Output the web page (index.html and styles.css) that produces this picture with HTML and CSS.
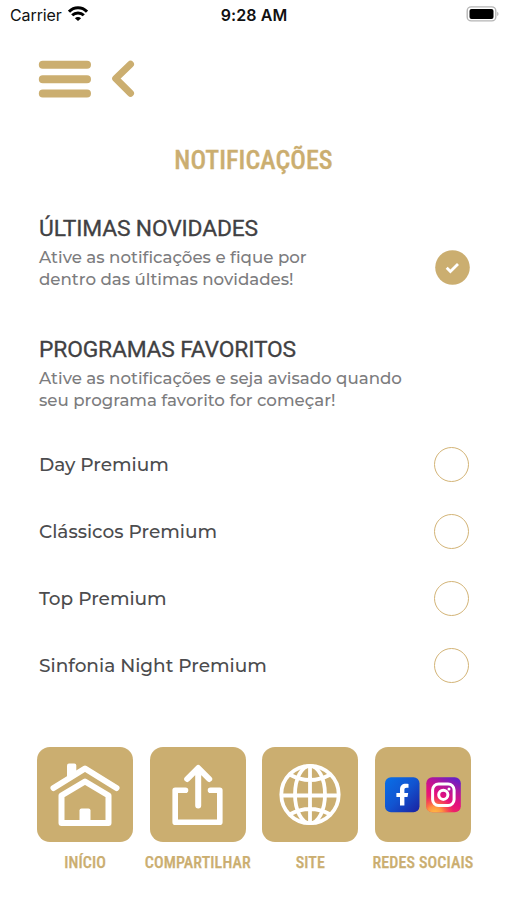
FILE: index.html
```html
<!DOCTYPE html>
<html lang="pt-BR">
<head>
<meta charset="utf-8">
<meta name="viewport" content="width=device-width, initial-scale=1">
<title>Notificações</title>
<link rel="stylesheet" href="styles.css">
</head>
<body>
<header class="status">
  <div class="carrier"><span>Carrier</span>
    <svg class="wifi" width="20" height="15" viewBox="0 0 20 15" fill="none" stroke="#000" stroke-width="3"><path d="M1 5.700C6 .5 14 .5 19 5.700M4.200 9.300c3.100-3.100 8.500-3.100 11.600 0"/><path d="M6.900 12.200c1.800-1.600 4.400-1.600 6.200 0L10 15z" fill="#000" stroke="none"/></svg>
  </div>
  <time>9:28 AM</time>
  <svg class="battery" width="33" height="16" viewBox="0 0 33 16"><rect x="1.200" y=".9" width="28.600" height="14" rx="4" fill="#fff" stroke="#b5b5b5" stroke-width="1.400"/><rect x="3.500" y="3.100" width="24" height="9.800" rx="2" fill="#000"/><path d="M31.300 5.700c1.500.6 1.500 3.800 0 4.400z" fill="#aaa"/></svg>
</header>
<nav class="top">
  <svg width="53" height="38" viewBox="0 0 53 38" stroke="#cbae70" stroke-width="8" stroke-linecap="round"><path d="M4.800 4.800h44.200M4.800 19.200h44.200M4.800 33.400h44.200"/></svg>
  <svg width="24" height="38" viewBox="0 0 24 38" fill="none" stroke="#cbae70" stroke-width="7" stroke-linecap="round" stroke-linejoin="round"><path d="M19.500 4.300 4.700 18.600l14.800 14.700"/></svg>
</nav>
<h1>NOTIFICAÇÕES</h1>
<main>
  <section class="intro first">
    <div><h2>ÚLTIMAS NOVIDADES</h2>
    <p>Ative as notificações e fique por<br>dentro das últimas novidades!</p></div>
    <svg class="check" width="35" height="35" viewBox="0 0 35 35"><circle cx="17.500" cy="17.500" r="17.300" fill="#cbae70"/><path d="m11.700 17.800 3.700 3.800 7.600-7.600" fill="none" stroke="#fff" stroke-width="2.800"/></svg>
  </section>
  <section class="intro">
    <div><h2>PROGRAMAS FAVORITOS</h2>
    <p>Ative as notificações e seja avisado quando<br>seu programa favorito for começar!</p></div>
  </section>
  <ul>
    <li><span>Day Premium</span><i class="radio"></i></li>
    <li><span>Clássicos Premium</span><i class="radio"></i></li>
    <li><span>Top Premium</span><i class="radio"></i></li>
    <li><span>Sinfonia Night Premium</span><i class="radio"></i></li>
  </ul>
</main>
<footer>
  <div class="item">
    <div class="tile"><svg width="96" height="95" viewBox="0 0 96 95" fill="none" stroke="#fff" stroke-width="6" stroke-linecap="round" stroke-linejoin="round"><path d="M16.500 41 48 21.500 79.500 41"/><path d="M30 32V18.500q0-2 2-2h5.300q2 0 2 2v8z" fill="#fff" stroke="none"/><path d="M24.500 48.500v27.500h47V48.500L48 34.500z"/><path d="M42.500 76V63.500q0-2 2-2h7q2 0 2 2V76z" fill="#fff" stroke="none"/></svg></div>
    <span class="label">INÍCIO</span>
  </div>
  <div class="item">
    <div class="tile"><svg width="96" height="95" viewBox="0 0 96 95" fill="none" stroke="#fff" stroke-width="6" stroke-linecap="round" stroke-linejoin="round"><path d="M48.200 58.500V22M37.200 32l11-11 11 11"/><path stroke-width="5.600" d="M35.500 43.300H25.200v32h44.600v-32H60.500"/></svg></div>
    <span class="label">COMPARTILHAR</span>
  </div>
  <div class="item">
    <div class="tile"><svg width="96" height="95" viewBox="0 0 96 95" fill="none" stroke="#fff" stroke-width="3.800"><circle cx="48" cy="47.500" r="28.700"/><ellipse cx="48" cy="47.500" rx="15" ry="28.700"/><path d="M48 19v57M19.500 48.500h57M27.500 27.500q20.500 11 41 0M27.500 67.500q20.500-11 41 0"/></svg></div>
    <span class="label">SITE</span>
  </div>
  <div class="item">
    <div class="tile"><svg width="96" height="95" viewBox="0 0 96 95">
      <defs>
        <linearGradient id="blue" x1="0" y1="0" x2="1" y2="1"><stop stop-color="#0870e8"/><stop offset=".5" stop-color="#1254d0"/><stop offset="1" stop-color="#1b20a0"/></linearGradient>
        <linearGradient id="pink" x1=".2" y1="1" x2=".7" y2="0"><stop stop-color="#f83850"/><stop offset=".45" stop-color="#e5107d"/><stop offset=".75" stop-color="#b0159d"/><stop offset="1" stop-color="#6b1fc4"/></linearGradient>
        <radialGradient id="sun" cx=".25" cy="1.050" r=".55"><stop stop-color="#ffc043"/><stop offset=".4" stop-color="#ff9440"/><stop offset="1" stop-color="#ff5040" stop-opacity="0"/></radialGradient>
      </defs>
      <rect x="10" y="30.300" width="34.500" height="35" rx="6" fill="url(#blue)"/>
      <path d="M25 58.500V50h-3.600v-4h3.600v-3.200c0-4.100 2.300-6 5.800-6 1 0 2 .1 2.700.3v3.600h-1.800c-1.700 0-2.300.8-2.300 2.300v3h3.800l-.7 4h-3.100v8.500z" fill="#fff"/>
      <g><rect x="51.300" y="30.300" width="34.500" height="35" rx="6" fill="url(#pink)"/><rect x="51.300" y="30.300" width="34.500" height="35" rx="6" fill="url(#sun)"/></g>
      <g fill="none" stroke="#fff" stroke-width="3"><rect x="57.600" y="37" width="21.500" height="21.500" rx="6"/><circle cx="68.300" cy="47.800" r="4.600"/></g><circle cx="74" cy="42" r="1.500" fill="#fff"/>
    </svg></div>
    <span class="label">REDES SOCIAIS</span>
  </div>
</footer>
</body>
</html>
```
FILE: styles.css
```css
* { box-sizing: border-box; margin: 0; padding: 0; }
body { width: 507px; height: 900px; overflow: hidden; background: #fff; color: #414143; font-family: Montserrat, Inter, sans-serif; }
svg { display: block; flex: none; }
.status { height: 30px; padding: 0 8px 0 10px; display: grid; grid-template-columns: 1fr auto 1fr; align-items: center; color: #111; font: 400 16px/30px Inter, sans-serif; }
.carrier { display: flex; gap: 6px; align-items: center; }
.carrier span { letter-spacing: -.1px; }
.wifi { margin-top: -3px; }
.status time { font-weight: 600; letter-spacing: .1px; margin-left: -1px; }
.battery { justify-self: end; margin-top: -3px; }
.top { display: flex; gap: 20px; padding: 30px 0 0 38px; height: 68px; }
h1 { margin-top: 44px; text-align: center; font: 500 26px/36px "Roboto Condensed", Roboto, sans-serif; letter-spacing: .05px; -webkit-text-stroke: .3px #cbae70; color: #cbae70; }
main { padding: 0 38px 0 39px; }
.intro { height: 82px; display: flex; justify-content: space-between; }
.first { margin-top: 37px; height: 121px; }
h2 { font: 400 22.800px/28px Roboto, sans-serif; letter-spacing: -.15px; -webkit-text-stroke: .3px #414143; white-space: nowrap; }
p { margin-top: 3px; font-size: 16.650px; font-weight: 500; line-height: 22px; color: #7c7c7e; white-space: nowrap; font-variant-ligatures: none; }
.check { margin: 35px -.500px 0 0; }
ul { list-style: none; padding-top: 12.500px; }
li { height: 67px; display: flex; align-items: center; justify-content: space-between; font-size: 18.500px; font-weight: 500; white-space: nowrap; color: #4c4c4e; }
.radio { width: 35px; height: 35px; margin-right: -.400px; border: 1.500px solid #d3b477; border-radius: 50%; }
footer { display: grid; grid-template-columns: repeat(4, 96px); gap: 16.600px; padding-left: 37.200px; margin-top: 48.500px; }
.item { display: flex; flex-direction: column; align-items: center; }
.tile { width: 96px; height: 95px; border-radius: 13px; background: #cbae70; }
.label { margin-top: 11px; font: 500 16px/20px "Roboto Condensed", Roboto, sans-serif; letter-spacing: .13px; -webkit-text-stroke: .25px #cbae70; color: #cbae70; white-space: nowrap; }
```
